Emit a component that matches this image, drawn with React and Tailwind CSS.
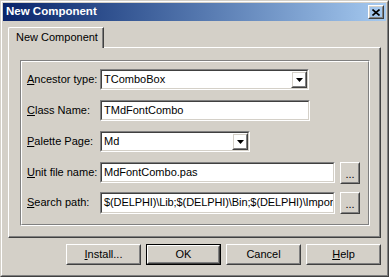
import React from "react";

function Raised({ className = "", children }) {
  return (
    <div className={"border border-t-white border-l-white border-b-[#404040] border-r-[#404040] " + className}>
      <div className="w-full h-full border border-t-[#d4d0c8] border-l-[#d4d0c8] border-b-[#808080] border-r-[#808080] flex items-center justify-center">
        {children}
      </div>
    </div>
  );
}

function Sunken({ className = "", children }) {
  return (
    <div className={"border border-t-[#808080] border-l-[#808080] border-b-white border-r-white " + className}>
      <div className="w-full h-full border border-t-[#404040] border-l-[#404040] border-b-[#d4d0c8] border-r-[#d4d0c8] bg-white flex items-center overflow-hidden">
        {children}
      </div>
    </div>
  );
}

function Arrow() {
  return (
    <svg width="7" height="4" viewBox="0 0 7 4" className="block">
      <path d="M0 0H7L3.5 4Z" fill="#000" />
    </svg>
  );
}

function Combo({ value, width }) {
  return (
    <Sunken className={width + " h-[21px]"}>
      <span className="flex-1 pl-[2px] whitespace-nowrap">{value}</span>
      <Raised className="w-[16px] h-full shrink-0">
        <Arrow />
      </Raised>
    </Sunken>
  );
}

function Edit({ value, width }) {
  return (
    <Sunken className={width + " h-[21px]"}>
      <span className="pl-[2px] whitespace-nowrap">{value}</span>
    </Sunken>
  );
}

function Row({ label, ul, children }) {
  const rest = label.slice(1);
  return (
    <div className="flex items-center h-[21px]">
      <div className="w-[73px] shrink-0 whitespace-nowrap">
        <u>{ul}</u>
        {rest}
      </div>
      {children}
    </div>
  );
}

function Dots() {
  return (
    <Raised className="w-[20px] h-[22px] ml-[5px] shrink-0">
      <span className="leading-none pt-[4px]">...</span>
    </Raised>
  );
}

function Btn({ children, def }) {
  if (def) {
    return (
      <div className="w-[75px] h-[21px] border border-black">
        <Raised className="w-full h-full">{children}</Raised>
      </div>
    );
  }
  return <Raised className="w-[75px] h-[21px]">{children}</Raised>;
}

export default function App() {
  return (
    <div className="w-[389px] h-[277px] bg-[#d4d0c8] border border-t-[#d4d0c8] border-l-[#d4d0c8] border-b-[#404040] border-r-[#404040] font-['Liberation_Sans',Arial,sans-serif] text-[11px] text-black leading-none select-none">
      <div className="h-full border border-t-white border-l-white border-b-[#808080] border-r-[#808080] p-px flex flex-col">
        {/* Title bar */}
        <div className="h-[18px] shrink-0 flex items-center justify-between bg-gradient-to-r from-[#0a246a] to-[#a6caf0] pl-[3px] pr-[2px]">
          <span className="text-white font-bold text-[11.5px]">New Component</span>
          <Raised className="w-[16px] h-[14px]">
            <svg width="8" height="7" viewBox="0 0 8 7" className="block">
              <path d="M0.5 0.5L7.5 6.5M7.5 0.5L0.5 6.5" stroke="#000" strokeWidth="1.6" />
            </svg>
          </Raised>
        </div>

        {/* Body */}
        <div className="flex-1 flex flex-col px-[5px] pt-[6px]">
          {/* Tab */}
          <div className="relative z-10 w-[96px] h-[21px] -mb-px bg-[#d4d0c8] border-t border-l border-r border-t-white border-l-white border-r-[#404040] rounded-tl-[2px]">
            <div className="h-full border-r border-r-[#808080] flex items-center pl-[7px] pb-px">
              New Component
            </div>
          </div>
          {/* Sheet */}
          <div className="w-[373px] h-[191px] border border-t-white border-l-white border-b-[#404040] border-r-[#404040]">
            <div className="w-full h-full border-b border-r border-b-[#808080] border-r-[#808080] pl-[11px] pt-[12px]">
              {/* Etched group */}
              <div className="w-[350px] h-[166px] border border-t-[#808080] border-l-[#808080] border-b-white border-r-white">
                <div className="w-full h-full border border-t-white border-l-white border-b-[#808080] border-r-[#808080] pl-[5px] pt-[7px] flex flex-col gap-[10px]">
                  <Row label="Ancestor type:" ul="A">
                    <Combo value="TComboBox" width="w-[209px]" />
                  </Row>
                  <Row label="Class Name:" ul="C">
                    <Edit value="TMdFontCombo" width="w-[210px]" />
                  </Row>
                  <Row label="Palette Page:" ul="P">
                    <Combo value="Md" width="w-[150px]" />
                  </Row>
                  <Row label="Unit file name:" ul="U">
                    <Edit value="MdFontCombo.pas" width="w-[235px]" />
                    <Dots />
                  </Row>
                  <div className="-mt-px">
                    <Row label="Search path:" ul="S">
                      <Sunken className="w-[235px] h-[22px]">
                        <span className="pl-[2px] whitespace-nowrap tracking-[-0.1px]">
                          $(DELPHI)\Lib;$(DELPHI)\Bin;$(DELPHI)\Impor
                        </span>
                      </Sunken>
                      <Dots />
                    </Row>
                  </div>
                </div>
              </div>
            </div>
          </div>

          {/* Buttons */}
          <div className="flex justify-end gap-[5px] mt-[6px] w-[373px]">
            <Btn>
              <span>
                <u>I</u>nstall...
              </span>
            </Btn>
            <Btn def>OK</Btn>
            <Btn>Cancel</Btn>
            <Btn>
              <span>
                <u>H</u>elp
              </span>
            </Btn>
          </div>
        </div>
      </div>
    </div>
  );
}
